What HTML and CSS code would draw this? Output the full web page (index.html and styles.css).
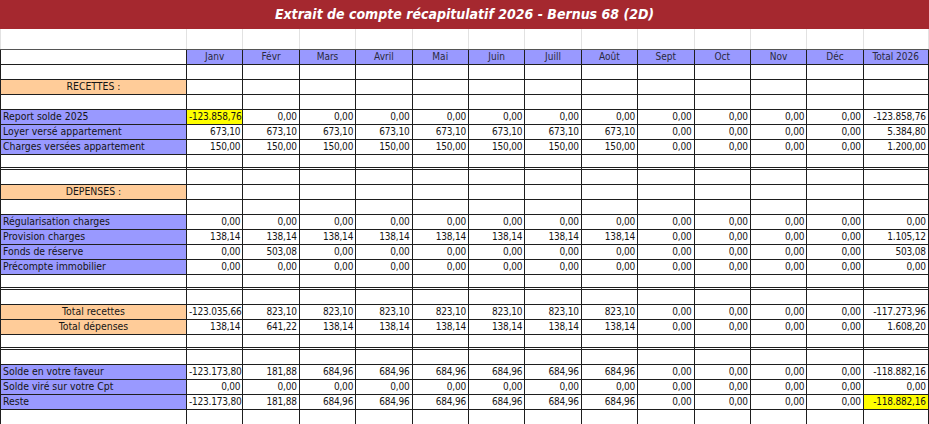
FILE: index.html
```html
<!DOCTYPE html>
<html lang="fr">
<head>
<meta charset="utf-8">
<title>Extrait de compte récapitulatif 2026</title>
<link rel="stylesheet" href="styles.css">
</head>
<body>
<div class="sheet">
  <div class="title">Extrait de compte récapitulatif 2026 - Bernus 68 (2D)</div>
  <table class="grid">
    <colgroup>
      <col class="c-label">
      <col class="c-m"><col class="c-m"><col class="c-m"><col class="c-m"><col class="c-m"><col class="c-m">
      <col class="c-m"><col class="c-m"><col class="c-m"><col class="c-m"><col class="c-m"><col class="c-m">
      <col class="c-tot">
    </colgroup>
    <tbody>
      <tr class="spacer"><td></td><td></td><td></td><td></td><td></td><td></td><td></td><td></td><td></td><td></td><td></td><td></td><td></td><td></td></tr>
      <tr class="head">
        <td class="blank"></td>
        <td>Janv</td><td>Févr</td><td>Mars</td><td>Avril</td><td>Mai</td><td>Juin</td><td>Juill</td><td>Août</td><td>Sept</td><td>Oct</td><td>Nov</td><td>Déc</td><td>Total 2026</td>
      </tr>
      <tr class="empty"><td></td><td></td><td></td><td></td><td></td><td></td><td></td><td></td><td></td><td></td><td></td><td></td><td></td><td></td></tr>
      <tr class="empty"><td class="section">RECETTES :</td><td></td><td></td><td></td><td></td><td></td><td></td><td></td><td></td><td></td><td></td><td></td><td></td><td></td></tr>
      <tr class="empty"><td></td><td></td><td></td><td></td><td></td><td></td><td></td><td></td><td></td><td></td><td></td><td></td><td></td><td></td></tr>
      <tr class="data">
        <td class="lbl">Report solde 2025</td>
        <td class="hl">-123.858,76</td><td>0,00</td><td>0,00</td><td>0,00</td><td>0,00</td><td>0,00</td><td>0,00</td><td>0,00</td><td>0,00</td><td>0,00</td><td>0,00</td><td>0,00</td><td>-123.858,76</td>
      </tr>
      <tr class="data">
        <td class="lbl">Loyer versé appartement</td>
        <td>673,10</td><td>673,10</td><td>673,10</td><td>673,10</td><td>673,10</td><td>673,10</td><td>673,10</td><td>673,10</td><td>0,00</td><td>0,00</td><td>0,00</td><td>0,00</td><td>5.384,80</td>
      </tr>
      <tr class="data">
        <td class="lbl">Charges versées appartement</td>
        <td>150,00</td><td>150,00</td><td>150,00</td><td>150,00</td><td>150,00</td><td>150,00</td><td>150,00</td><td>150,00</td><td>0,00</td><td>0,00</td><td>0,00</td><td>0,00</td><td>1.200,00</td>
      </tr>
      <tr class="empty dbl"><td></td><td></td><td></td><td></td><td></td><td></td><td></td><td></td><td></td><td></td><td></td><td></td><td></td><td></td></tr>
      <tr class="empty"><td></td><td></td><td></td><td></td><td></td><td></td><td></td><td></td><td></td><td></td><td></td><td></td><td></td><td></td></tr>
      <tr class="empty"><td class="section">DEPENSES :</td><td></td><td></td><td></td><td></td><td></td><td></td><td></td><td></td><td></td><td></td><td></td><td></td><td></td></tr>
      <tr class="empty"><td></td><td></td><td></td><td></td><td></td><td></td><td></td><td></td><td></td><td></td><td></td><td></td><td></td><td></td></tr>
      <tr class="data">
        <td class="lbl">Régularisation charges</td>
        <td>0,00</td><td>0,00</td><td>0,00</td><td>0,00</td><td>0,00</td><td>0,00</td><td>0,00</td><td>0,00</td><td>0,00</td><td>0,00</td><td>0,00</td><td>0,00</td><td>0,00</td>
      </tr>
      <tr class="data">
        <td class="lbl">Provision charges</td>
        <td>138,14</td><td>138,14</td><td>138,14</td><td>138,14</td><td>138,14</td><td>138,14</td><td>138,14</td><td>138,14</td><td>0,00</td><td>0,00</td><td>0,00</td><td>0,00</td><td>1.105,12</td>
      </tr>
      <tr class="data">
        <td class="lbl">Fonds de réserve</td>
        <td>0,00</td><td>503,08</td><td>0,00</td><td>0,00</td><td>0,00</td><td>0,00</td><td>0,00</td><td>0,00</td><td>0,00</td><td>0,00</td><td>0,00</td><td>0,00</td><td>503,08</td>
      </tr>
      <tr class="data">
        <td class="lbl">Précompte immobilier</td>
        <td>0,00</td><td>0,00</td><td>0,00</td><td>0,00</td><td>0,00</td><td>0,00</td><td>0,00</td><td>0,00</td><td>0,00</td><td>0,00</td><td>0,00</td><td>0,00</td><td>0,00</td>
      </tr>
      <tr class="empty dbl"><td></td><td></td><td></td><td></td><td></td><td></td><td></td><td></td><td></td><td></td><td></td><td></td><td></td><td></td></tr>
      <tr class="empty"><td></td><td></td><td></td><td></td><td></td><td></td><td></td><td></td><td></td><td></td><td></td><td></td><td></td><td></td></tr>
      <tr class="data">
        <td class="section">Total recettes</td>
        <td>-123.035,66</td><td>823,10</td><td>823,10</td><td>823,10</td><td>823,10</td><td>823,10</td><td>823,10</td><td>823,10</td><td>0,00</td><td>0,00</td><td>0,00</td><td>0,00</td><td>-117.273,96</td>
      </tr>
      <tr class="data">
        <td class="section">Total dépenses</td>
        <td>138,14</td><td>641,22</td><td>138,14</td><td>138,14</td><td>138,14</td><td>138,14</td><td>138,14</td><td>138,14</td><td>0,00</td><td>0,00</td><td>0,00</td><td>0,00</td><td>1.608,20</td>
      </tr>
      <tr class="empty dbl"><td></td><td></td><td></td><td></td><td></td><td></td><td></td><td></td><td></td><td></td><td></td><td></td><td></td><td></td></tr>
      <tr class="empty"><td></td><td></td><td></td><td></td><td></td><td></td><td></td><td></td><td></td><td></td><td></td><td></td><td></td><td></td></tr>
      <tr class="data">
        <td class="lbl">Solde en votre faveur</td>
        <td>-123.173,80</td><td>181,88</td><td>684,96</td><td>684,96</td><td>684,96</td><td>684,96</td><td>684,96</td><td>684,96</td><td>0,00</td><td>0,00</td><td>0,00</td><td>0,00</td><td>-118.882,16</td>
      </tr>
      <tr class="data">
        <td class="lbl">Solde viré sur votre Cpt</td>
        <td>0,00</td><td>0,00</td><td>0,00</td><td>0,00</td><td>0,00</td><td>0,00</td><td>0,00</td><td>0,00</td><td>0,00</td><td>0,00</td><td>0,00</td><td>0,00</td><td>0,00</td>
      </tr>
      <tr class="data">
        <td class="lbl">Reste</td>
        <td>-123.173,80</td><td>181,88</td><td>684,96</td><td>684,96</td><td>684,96</td><td>684,96</td><td>684,96</td><td>684,96</td><td>0,00</td><td>0,00</td><td>0,00</td><td>0,00</td><td class="hl">-118.882,16</td>
      </tr>
      <tr class="empty"><td></td><td></td><td></td><td></td><td></td><td></td><td></td><td></td><td></td><td></td><td></td><td></td><td></td><td></td></tr>
    </tbody>
  </table>
</div>
</body>
</html>
```

FILE: styles.css
```css
html, body {
  margin: 0;
  padding: 0;
  background: #ffffff;
}

.sheet {
  width: 929px;
  height: 424px;
  overflow: hidden;
  font-family: "DejaVu Sans Condensed", "DejaVu Sans", sans-serif;
  font-size: 10px;
  color: #151515;
}

.title {
  height: 29px;
  background: #a5282f;
  color: #ffffff;
  font-weight: bold;
  font-style: italic;
  font-size: 14px;
  line-height: 29px;
  text-align: center;
}

.grid {
  border-collapse: collapse;
  table-layout: fixed;
  width: 928px;
}

.c-label { width: 186px; }
.c-m { width: 56.4px; }
.c-tot { width: 65px; }

.grid td {
  height: 15px;
  padding: 0 2px;
  border: 1px solid #1e1e1e;
  box-sizing: border-box;
  white-space: nowrap;
  overflow: hidden;
  line-height: 13px;
  text-align: right;
  letter-spacing: -0.2px;
}

.grid tr.spacer td {
  height: 20px;
  border: 1px solid #e2e2e2;
  border-top: none;
  border-bottom-color: #555555;
}

.grid tr.head td {
  background: #9999ff;
  text-align: center;
  color: #2a2a40;
  letter-spacing: 0;
}

.grid tr.head td.blank {
  background: #ffffff;
}

.grid td.lbl {
  background: #9999ff;
  text-align: left;
  padding-left: 2px;
  letter-spacing: 0;
  font-size: 10.4px;
}

.grid td.section {
  background: #ffcc99;
  text-align: center;
  letter-spacing: 0;
  font-size: 10.4px;
}

.grid td.hl {
  background: #ffff00;
}

.grid tr.dbl td {
  box-shadow: inset 0 -1px 0 #ffffff, inset 0 -2px 0 #1e1e1e;
}
```
